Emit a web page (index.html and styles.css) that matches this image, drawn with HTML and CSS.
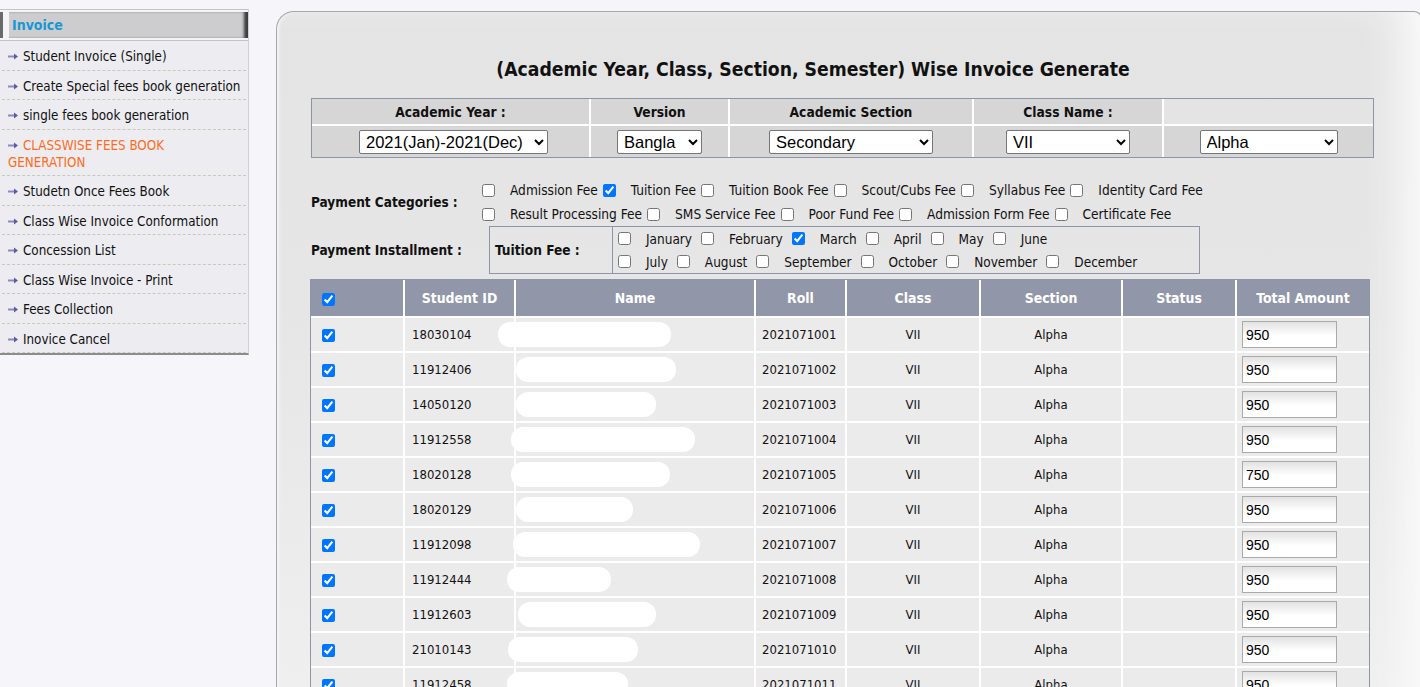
FILE: index.html
```html
<!DOCTYPE html>
<html lang="en">
<head>
<meta charset="utf-8">
<title>Invoice Generate</title>
<link rel="stylesheet" href="styles.css">
</head>
<body>
<div class="page">
  <aside class="sidebar">
    <div class="side-head"><span class="side-grip"></span><span class="side-head-bar">Invoice</span></div>
    <ul class="side-menu">
      <li><a href="#"><svg class="arr" viewBox="0 0 11 7" width="11" height="7"><path d="M0 3.5H6" stroke="#8a8ac0" stroke-width="2"/><path d="M6 0.5L10 3.5L6 6.5Z" fill="#5b5b9e"/></svg>Student Invoice (Single)</a></li>
      <li><a href="#"><svg class="arr" viewBox="0 0 11 7" width="11" height="7"><path d="M0 3.5H6" stroke="#8a8ac0" stroke-width="2"/><path d="M6 0.5L10 3.5L6 6.5Z" fill="#5b5b9e"/></svg>Create Special fees book generation</a></li>
      <li><a href="#"><svg class="arr" viewBox="0 0 11 7" width="11" height="7"><path d="M0 3.5H6" stroke="#8a8ac0" stroke-width="2"/><path d="M6 0.5L10 3.5L6 6.5Z" fill="#5b5b9e"/></svg>single fees book generation</a></li>
      <li class="active"><a href="#"><svg class="arr" viewBox="0 0 11 7" width="11" height="7"><path d="M0 3.5H6" stroke="#8a8ac0" stroke-width="2"/><path d="M6 0.5L10 3.5L6 6.5Z" fill="#5b5b9e"/></svg>CLASSWISE FEES BOOK GENERATION</a></li>
      <li><a href="#"><svg class="arr" viewBox="0 0 11 7" width="11" height="7"><path d="M0 3.5H6" stroke="#8a8ac0" stroke-width="2"/><path d="M6 0.5L10 3.5L6 6.5Z" fill="#5b5b9e"/></svg>Studetn Once Fees Book</a></li>
      <li><a href="#"><svg class="arr" viewBox="0 0 11 7" width="11" height="7"><path d="M0 3.5H6" stroke="#8a8ac0" stroke-width="2"/><path d="M6 0.5L10 3.5L6 6.5Z" fill="#5b5b9e"/></svg>Class Wise Invoice Conformation</a></li>
      <li><a href="#"><svg class="arr" viewBox="0 0 11 7" width="11" height="7"><path d="M0 3.5H6" stroke="#8a8ac0" stroke-width="2"/><path d="M6 0.5L10 3.5L6 6.5Z" fill="#5b5b9e"/></svg>Concession List</a></li>
      <li><a href="#"><svg class="arr" viewBox="0 0 11 7" width="11" height="7"><path d="M0 3.5H6" stroke="#8a8ac0" stroke-width="2"/><path d="M6 0.5L10 3.5L6 6.5Z" fill="#5b5b9e"/></svg>Class Wise Invoice - Print</a></li>
      <li><a href="#"><svg class="arr" viewBox="0 0 11 7" width="11" height="7"><path d="M0 3.5H6" stroke="#8a8ac0" stroke-width="2"/><path d="M6 0.5L10 3.5L6 6.5Z" fill="#5b5b9e"/></svg>Fees Collection</a></li>
      <li><a href="#"><svg class="arr" viewBox="0 0 11 7" width="11" height="7"><path d="M0 3.5H6" stroke="#8a8ac0" stroke-width="2"/><path d="M6 0.5L10 3.5L6 6.5Z" fill="#5b5b9e"/></svg>Inovice Cancel</a></li>
    </ul>
  </aside>

  <main class="panel">
    <h1 class="title">(Academic Year, Class, Section, Semester) Wise Invoice Generate</h1>

    <table class="filter">
      <colgroup><col class="f1"><col class="f2"><col class="f3"><col class="f4"><col class="f5"></colgroup>
      <tr class="fhead">
        <th>Academic Year :</th>
        <th>Version</th>
        <th>Academic Section</th>
        <th>Class Name :</th>
        <th class="blank"></th>
      </tr>
      <tr class="fbody">
        <td><select class="sel sel-year"><option>2021(Jan)-2021(Dec)</option></select></td>
        <td><select class="sel sel-ver"><option>Bangla</option></select></td>
        <td><select class="sel sel-sec"><option>Secondary</option></select></td>
        <td><select class="sel sel-cls"><option>VII</option></select></td>
        <td><select class="sel sel-grp"><option>Alpha</option></select></td>
      </tr>
    </table>

    <div class="params">
      <div class="param-row cats-row">
        <div class="param-label">Payment Categories :</div>
        <div class="checks cats">
          <div class="check-line">
            <span class="chk"><input type="checkbox"><label>Admission Fee</label></span>
            <span class="chk"><input type="checkbox" checked><label>Tuition Fee</label></span>
            <span class="chk"><input type="checkbox"><label>Tuition Book Fee</label></span>
            <span class="chk"><input type="checkbox"><label>Scout/Cubs Fee</label></span>
            <span class="chk"><input type="checkbox"><label>Syllabus Fee</label></span>
            <span class="chk"><input type="checkbox"><label>Identity Card Fee</label></span>
          </div>
          <div class="check-line">
            <span class="chk"><input type="checkbox"><label>Result Processing Fee</label></span>
            <span class="chk"><input type="checkbox"><label>SMS Service Fee</label></span>
            <span class="chk"><input type="checkbox"><label>Poor Fund Fee</label></span>
            <span class="chk"><input type="checkbox"><label>Admission Form Fee</label></span>
            <span class="chk"><input type="checkbox"><label>Certificate Fee</label></span>
          </div>
        </div>
      </div>
      <div class="param-row inst-row">
        <div class="param-label">Payment Installment :</div>
        <div class="inst-box">
          <div class="inst-label">Tuition Fee :</div>
          <div class="checks months">
            <div class="check-line">
              <span class="chk"><input type="checkbox"><label>January</label></span>
              <span class="chk"><input type="checkbox"><label>February</label></span>
              <span class="chk"><input type="checkbox" checked><label>March</label></span>
              <span class="chk"><input type="checkbox"><label>April</label></span>
              <span class="chk"><input type="checkbox"><label>May</label></span>
              <span class="chk"><input type="checkbox"><label>June</label></span>
            </div>
            <div class="check-line">
              <span class="chk"><input type="checkbox"><label>July</label></span>
              <span class="chk"><input type="checkbox"><label>August</label></span>
              <span class="chk"><input type="checkbox"><label>September</label></span>
              <span class="chk"><input type="checkbox"><label>October</label></span>
              <span class="chk"><input type="checkbox"><label>November</label></span>
              <span class="chk"><input type="checkbox"><label>December</label></span>
            </div>
          </div>
        </div>
      </div>
    </div>

    <table class="grid">
      <colgroup><col class="g1"><col class="g2"><col class="g3"><col class="g4"><col class="g5"><col class="g6"><col class="g7"><col class="g8"></colgroup>
      <thead>
        <tr>
          <th class="c-chk"><input type="checkbox" checked></th>
          <th>Student ID</th>
          <th>Name</th>
          <th>Roll</th>
          <th>Class</th>
          <th>Section</th>
          <th>Status</th>
          <th>Total Amount</th>
        </tr>
      </thead>
      <tbody>
        <tr><td class="c-chk"><input type="checkbox" checked></td><td class="c-id">18030104</td><td class="c-name"><span class="blot" style="margin-left:-18px;width:173px"></span></td><td class="c-roll">2021071001</td><td class="c-mid">VII</td><td class="c-mid">Alpha</td><td></td><td class="c-amt"><input class="amt" type="text" value="950"></td></tr>
        <tr><td class="c-chk"><input type="checkbox" checked></td><td class="c-id">11912406</td><td class="c-name"><span class="blot" style="margin-left:0px;width:160px"></span></td><td class="c-roll">2021071002</td><td class="c-mid">VII</td><td class="c-mid">Alpha</td><td></td><td class="c-amt"><input class="amt" type="text" value="950"></td></tr>
        <tr><td class="c-chk"><input type="checkbox" checked></td><td class="c-id">14050120</td><td class="c-name"><span class="blot" style="margin-left:0px;width:140px"></span></td><td class="c-roll">2021071003</td><td class="c-mid">VII</td><td class="c-mid">Alpha</td><td></td><td class="c-amt"><input class="amt" type="text" value="950"></td></tr>
        <tr><td class="c-chk"><input type="checkbox" checked></td><td class="c-id">11912558</td><td class="c-name"><span class="blot" style="margin-left:-5px;width:184px"></span></td><td class="c-roll">2021071004</td><td class="c-mid">VII</td><td class="c-mid">Alpha</td><td></td><td class="c-amt"><input class="amt" type="text" value="950"></td></tr>
        <tr><td class="c-chk"><input type="checkbox" checked></td><td class="c-id">18020128</td><td class="c-name"><span class="blot" style="margin-left:-5px;width:159px"></span></td><td class="c-roll">2021071005</td><td class="c-mid">VII</td><td class="c-mid">Alpha</td><td></td><td class="c-amt"><input class="amt" type="text" value="750"></td></tr>
        <tr><td class="c-chk"><input type="checkbox" checked></td><td class="c-id">18020129</td><td class="c-name"><span class="blot" style="margin-left:0px;width:117px"></span></td><td class="c-roll">2021071006</td><td class="c-mid">VII</td><td class="c-mid">Alpha</td><td></td><td class="c-amt"><input class="amt" type="text" value="950"></td></tr>
        <tr><td class="c-chk"><input type="checkbox" checked></td><td class="c-id">11912098</td><td class="c-name"><span class="blot" style="margin-left:-3px;width:187px"></span></td><td class="c-roll">2021071007</td><td class="c-mid">VII</td><td class="c-mid">Alpha</td><td></td><td class="c-amt"><input class="amt" type="text" value="950"></td></tr>
        <tr><td class="c-chk"><input type="checkbox" checked></td><td class="c-id">11912444</td><td class="c-name"><span class="blot" style="margin-left:-9px;width:104px"></span></td><td class="c-roll">2021071008</td><td class="c-mid">VII</td><td class="c-mid">Alpha</td><td></td><td class="c-amt"><input class="amt" type="text" value="950"></td></tr>
        <tr><td class="c-chk"><input type="checkbox" checked></td><td class="c-id">11912603</td><td class="c-name"><span class="blot" style="margin-left:2px;width:138px"></span></td><td class="c-roll">2021071009</td><td class="c-mid">VII</td><td class="c-mid">Alpha</td><td></td><td class="c-amt"><input class="amt" type="text" value="950"></td></tr>
        <tr><td class="c-chk"><input type="checkbox" checked></td><td class="c-id">21010143</td><td class="c-name"><span class="blot" style="margin-left:-8px;width:130px"></span></td><td class="c-roll">2021071010</td><td class="c-mid">VII</td><td class="c-mid">Alpha</td><td></td><td class="c-amt"><input class="amt" type="text" value="950"></td></tr>
        <tr><td class="c-chk"><input type="checkbox" checked></td><td class="c-id">11912458</td><td class="c-name"><span class="blot" style="margin-left:-9px;width:121px"></span></td><td class="c-roll">2021071011</td><td class="c-mid">VII</td><td class="c-mid">Alpha</td><td></td><td class="c-amt"><input class="amt" type="text" value="950"></td></tr>
      </tbody>
    </table>
  </main>
</div>
</body>
</html>
```

FILE: styles.css
```css
html, body {
  margin: 0;
  padding: 0;
}
body {
  background: #f5f5fa;
  font-family: "DejaVu Sans Condensed", "DejaVu Sans", sans-serif;
  font-size: 13px;
  color: #111;
  overflow: hidden;
}
.page {
  display: flex;
  align-items: flex-start;
}

/* ---------- sidebar ---------- */
.sidebar {
  width: 249px;
  flex: 0 0 249px;
  margin-top: 9px;
  background: #ededf1;
  border-right: 1px solid #d0d0d4;
  border-bottom: 2px solid #8c8c8c;
  box-sizing: border-box;
}
.side-head {
  display: flex;
  align-items: stretch;
  height: 32px;
  box-sizing: border-box;
  border-top: 1px solid #c4c4c8;
  border-bottom: 1px solid #c4c4c8;
  background: #f4f4f6;
  padding: 2px 0;
}
.side-grip {
  width: 3px;
  background: #6a6a6a;
  margin-right: 6px;
}
.side-head-bar {
  flex: 1;
  display: flex;
  align-items: center;
  padding-left: 3px;
  background: #cdcdd0;
  box-shadow: inset -5px 0 3px -1px #3c3c3c;
  color: #1898d2;
  font-weight: bold;
  font-size: 14px;
}
.side-menu {
  list-style: none;
  margin: 0;
  padding: 0;
}
.side-menu li {
  margin: 0 2px 0 2px;
  border-bottom: 1px dashed #c9c9b8;
}
.side-menu a {
  display: block;
  padding: 7px 4px 4.5px 6px;
  line-height: 17px;
  color: #111;
  text-decoration: none;
  font-size: 13.3px;
}
.side-menu li.active a {
  color: #ff6c22;
}
.arr {
  display: inline-block;
  vertical-align: 1px;
  margin-right: 4px;
}

/* ---------- panel ---------- */
.panel {
  flex: 1;
  margin-left: 27px;
  margin-top: 11px;
  margin-right: -2px;
  height: 720px;
  border: 1px solid #a6a6a6;
  border-bottom: none;
  border-radius: 18px 8px 0 0;
  background: linear-gradient(to bottom, #e4e4e4 0px, #e6e6e6 300px, #efefef 680px);
  box-shadow: inset 3px 0 3px -1px #f4f4f4, inset -40px 0 40px -20px #fafafa;
  padding: 46px 0 0 34px;
  box-sizing: border-box;
}
.title {
  margin: 0 0 16px 0;
  width: 1004px;
  text-align: center;
  font-size: 19.2px;
  line-height: 24px;
  font-weight: bold;
  color: #111;
}

/* filter table */
.filter {
  width: 1063px;
  table-layout: fixed;
  border-collapse: separate;
  border-spacing: 0;
  border: 1px solid #8e95a8;
}
.f1 { width: 279px; }
.f2 { width: 139px; }
.f3 { width: 244px; }
.f4 { width: 190px; }
.f5 { width: 209px; }
.filter th, .filter td {
  padding: 0;
  text-align: center;
  background: #d6d6d6;
  border-right: 2px solid #fff;
}
.filter th:last-child, .filter td:last-child {
  border-right: none;
}
.filter th {
  height: 25px;
  border-bottom: 2px solid #fff;
  font-size: 13.7px;
  font-weight: bold;
}
.filter th.blank {
  background: #e4e4e4;
}
.filter td {
  height: 31px;
}
.sel {
  font-family: "Liberation Sans", Arial, sans-serif;
  font-size: 16.5px;
  height: 24px;
  color: #000;
  background: #fff;
  border: 1px solid #767676;
  border-radius: 2px;
  padding: 0 2px;
  vertical-align: middle;
}
.sel-year { width: 189px; margin-left: 6px; }
.sel-ver { width: 85px; }
.sel-sec { width: 164px; }
.sel-cls { width: 124px; }
.sel-grp { width: 138px; }

/* params */
.params {
  margin-top: 20px;
}
.param-row {
  display: flex;
  align-items: center;
}
.param-label {
  width: 167px;
  flex: 0 0 167px;
  font-weight: bold;
  font-size: 13.5px;
}
.checks {
  display: flex;
  flex-direction: column;
}
.check-line {
  display: flex;
  align-items: center;
  height: 24px;
}
.chk {
  display: flex;
  align-items: center;
}
.chk input {
  width: 13px;
  height: 13px;
  margin: 0 3px 0 4px;
}
.chk label {
  padding-left: 12px;
  margin-right: 1px;
  font-size: 13.6px;
}
.months .check-line {
  height: 23px;
}
.months .chk label {
  margin-right: 5px;
  font-size: 13.5px;
}
.inst-box {
  margin-left: 11px;
  display: flex;
  align-items: stretch;
  border: 1px solid #8e95a8;
  width: 711px;
  box-sizing: border-box;
}
.inst-label {
  width: 123px;
  flex: 0 0 123px;
  box-sizing: border-box;
  border-right: 1px solid #8e95a8;
  display: flex;
  align-items: center;
  padding-left: 5px;
  font-weight: bold;
  font-size: 13.6px;
}
.months {
  padding-left: 1px;
}

/* grid table */
.grid {
  margin-top: 5px;
  margin-left: -1px;
  width: 1060px;
  table-layout: fixed;
  border-collapse: separate;
  border-spacing: 0;
  border: 1px solid #8e95a8;
  border-bottom: none;
}
.g1 { width: 94px; }
.g2 { width: 111px; }
.g3 { width: 240px; }
.g4 { width: 91px; }
.g5 { width: 134px; }
.g6 { width: 142px; }
.g7 { width: 114px; }
.g8 { width: 132px; }
.grid th, .grid td {
  padding: 0;
  border-right: 2px solid #fff;
  border-bottom: 2px solid #fff;
}
.grid th:last-child, .grid td:last-child {
  border-right: none;
}
.grid th {
  height: 36px;
  background: #9197a8;
  color: #fff;
  font-weight: bold;
  font-size: 13.9px;
  text-align: center;
}
.grid td {
  height: 33px;
  background: #ebebeb;
  font-size: 13px;
}
.grid .c-chk {
  text-align: left;
  padding-left: 7px;
}
.grid .c-chk input {
  width: 13px;
  height: 13px;
  margin: 0 0 0 4px;
  vertical-align: middle;
}
.c-id {
  padding-left: 7px !important;
}
.c-roll {
  padding-left: 6px !important;
}
.c-mid {
  text-align: center;
}
.c-name {
  overflow: visible;
}
.blot {
  display: block;
  height: 25px;
  background: #fff;
  border-radius: 12px;
}
.c-amt {
  padding-left: 5px !important;
}
.amt {
  width: 95px;
  height: 27px;
  box-sizing: border-box;
  border: 1px solid #aaa;
  background: linear-gradient(to bottom, #e2e2e2 0, #fff 55%);
  font-family: "Liberation Sans", Arial, sans-serif;
  font-size: 14px;
  color: #000;
  padding: 0 3px;
  vertical-align: middle;
  margin: 0;
}
```
